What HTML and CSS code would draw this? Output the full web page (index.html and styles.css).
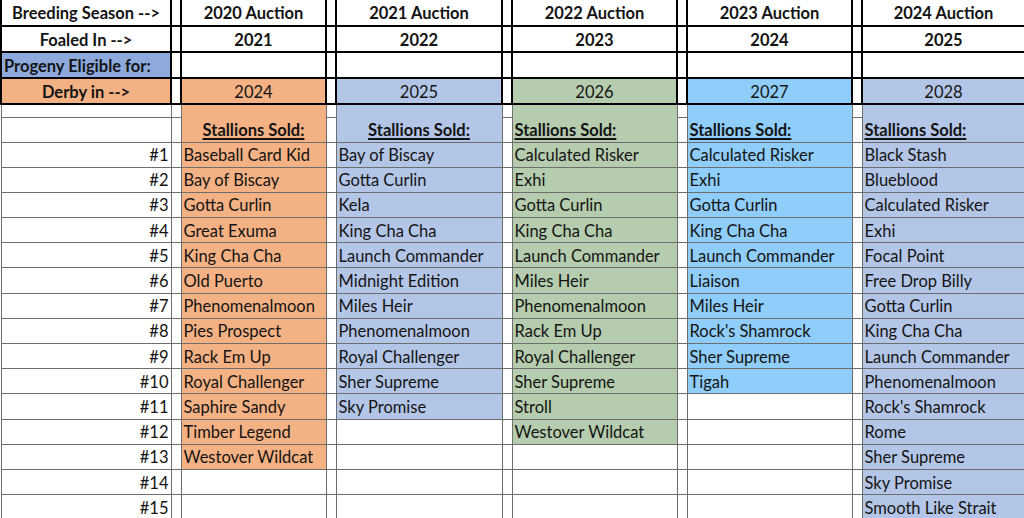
FILE: index.html
```html
<!DOCTYPE html>
<html>
<head>
<meta charset="utf-8">
<link rel="stylesheet" href="styles.css">
</head>
<body>
<table class="sheet">
  <colgroup>
    <col class="c-label"><col class="c-gap"><col class="c-a"><col class="c-gap"><col class="c-b"><col class="c-gap"><col class="c-c"><col class="c-gap"><col class="c-d"><col class="c-gap"><col class="c-e">
  </colgroup>
  <tbody>
    <tr class="r-head r1">
      <td class="hd lbl">Breeding Season --&gt;</td><td class="hd"></td>
      <td class="hd">2020 Auction</td><td class="hd"></td>
      <td class="hd">2021 Auction</td><td class="hd"></td>
      <td class="hd">2022 Auction</td><td class="hd"></td>
      <td class="hd">2023 Auction</td><td class="hd"></td>
      <td class="hd">2024 Auction</td>
    </tr>
    <tr class="r-head r2">
      <td class="hd lbl">Foaled In --&gt;</td><td class="hd"></td>
      <td class="hd">2021</td><td class="hd"></td>
      <td class="hd">2022</td><td class="hd"></td>
      <td class="hd">2023</td><td class="hd"></td>
      <td class="hd">2024</td><td class="hd"></td>
      <td class="hd">2025</td>
    </tr>
    <tr class="r-head r3">
      <td class="hd lbl left bg-prog">Progeny Eligible for:</td><td class="hd"></td>
      <td class="hd"></td><td class="hd"></td>
      <td class="hd"></td><td class="hd"></td>
      <td class="hd"></td><td class="hd"></td>
      <td class="hd"></td><td class="hd"></td>
      <td class="hd"></td>
    </tr>
    <tr class="r-head r4">
      <td class="hd lbl bg-or">Derby in --&gt;</td><td class="hd"></td>
      <td class="hd yr bg-or">2024</td><td class="hd"></td>
      <td class="hd yr bg-bl">2025</td><td class="hd"></td>
      <td class="hd yr bg-gr">2026</td><td class="hd"></td>
      <td class="hd yr bg-lb">2027</td><td class="hd"></td>
      <td class="hd yr bg-bl">2028</td>
    </tr>
    <tr class="r-spacer">
      <td></td><td></td>
      <td class="join bg-or"></td><td></td>
      <td class="join bg-bl"></td><td></td>
      <td class="join bg-gr"></td><td></td>
      <td class="join bg-lb"></td><td></td>
      <td class="join bg-bl"></td>
    </tr>
    <tr class="r-sold">
      <td></td><td></td>
      <td class="sold center bg-or"><span>Stallions Sold:</span></td><td></td>
      <td class="sold center bg-bl"><span>Stallions Sold:</span></td><td></td>
      <td class="sold bg-gr"><span>Stallions Sold:</span></td><td></td>
      <td class="sold bg-lb"><span>Stallions Sold:</span></td><td></td>
      <td class="sold bg-bl"><span>Stallions Sold:</span></td>
    </tr>
    <tr><td class="num">#1</td><td></td><td class="nm bg-or">Baseball Card Kid</td><td></td><td class="nm bg-bl">Bay of Biscay</td><td></td><td class="nm bg-gr">Calculated Risker</td><td></td><td class="nm bg-lb">Calculated Risker</td><td></td><td class="nm bg-bl">Black Stash</td></tr>
    <tr><td class="num">#2</td><td></td><td class="nm bg-or">Bay of Biscay</td><td></td><td class="nm bg-bl">Gotta Curlin</td><td></td><td class="nm bg-gr">Exhi</td><td></td><td class="nm bg-lb">Exhi</td><td></td><td class="nm bg-bl">Blueblood</td></tr>
    <tr><td class="num">#3</td><td></td><td class="nm bg-or">Gotta Curlin</td><td></td><td class="nm bg-bl">Kela</td><td></td><td class="nm bg-gr">Gotta Curlin</td><td></td><td class="nm bg-lb">Gotta Curlin</td><td></td><td class="nm bg-bl">Calculated Risker</td></tr>
    <tr><td class="num">#4</td><td></td><td class="nm bg-or">Great Exuma</td><td></td><td class="nm bg-bl">King Cha Cha</td><td></td><td class="nm bg-gr">King Cha Cha</td><td></td><td class="nm bg-lb">King Cha Cha</td><td></td><td class="nm bg-bl">Exhi</td></tr>
    <tr><td class="num">#5</td><td></td><td class="nm bg-or">King Cha Cha</td><td></td><td class="nm bg-bl">Launch Commander</td><td></td><td class="nm bg-gr">Launch Commander</td><td></td><td class="nm bg-lb">Launch Commander</td><td></td><td class="nm bg-bl">Focal Point</td></tr>
    <tr><td class="num">#6</td><td></td><td class="nm bg-or">Old Puerto</td><td></td><td class="nm bg-bl">Midnight Edition</td><td></td><td class="nm bg-gr">Miles Heir</td><td></td><td class="nm bg-lb">Liaison</td><td></td><td class="nm bg-bl">Free Drop Billy</td></tr>
    <tr><td class="num">#7</td><td></td><td class="nm bg-or">Phenomenalmoon</td><td></td><td class="nm bg-bl">Miles Heir</td><td></td><td class="nm bg-gr">Phenomenalmoon</td><td></td><td class="nm bg-lb">Miles Heir</td><td></td><td class="nm bg-bl">Gotta Curlin</td></tr>
    <tr><td class="num">#8</td><td></td><td class="nm bg-or">Pies Prospect</td><td></td><td class="nm bg-bl">Phenomenalmoon</td><td></td><td class="nm bg-gr">Rack Em Up</td><td></td><td class="nm bg-lb">Rock's Shamrock</td><td></td><td class="nm bg-bl">King Cha Cha</td></tr>
    <tr><td class="num">#9</td><td></td><td class="nm bg-or">Rack Em Up</td><td></td><td class="nm bg-bl">Royal Challenger</td><td></td><td class="nm bg-gr">Royal Challenger</td><td></td><td class="nm bg-lb">Sher Supreme</td><td></td><td class="nm bg-bl">Launch Commander</td></tr>
    <tr><td class="num">#10</td><td></td><td class="nm bg-or">Royal Challenger</td><td></td><td class="nm bg-bl">Sher Supreme</td><td></td><td class="nm bg-gr">Sher Supreme</td><td></td><td class="nm bg-lb">Tigah</td><td></td><td class="nm bg-bl">Phenomenalmoon</td></tr>
    <tr><td class="num">#11</td><td></td><td class="nm bg-or">Saphire Sandy</td><td></td><td class="nm bg-bl">Sky Promise</td><td></td><td class="nm bg-gr">Stroll</td><td></td><td class="nm"></td><td></td><td class="nm bg-bl">Rock's Shamrock</td></tr>
    <tr><td class="num">#12</td><td></td><td class="nm bg-or">Timber Legend</td><td></td><td class="nm"></td><td></td><td class="nm bg-gr">Westover Wildcat</td><td></td><td class="nm"></td><td></td><td class="nm bg-bl">Rome</td></tr>
    <tr><td class="num">#13</td><td></td><td class="nm bg-or">Westover Wildcat</td><td></td><td class="nm"></td><td></td><td class="nm"></td><td></td><td class="nm"></td><td></td><td class="nm bg-bl">Sher Supreme</td></tr>
    <tr><td class="num">#14</td><td></td><td class="nm"></td><td></td><td class="nm"></td><td></td><td class="nm"></td><td></td><td class="nm"></td><td></td><td class="nm bg-bl">Sky Promise</td></tr>
    <tr><td class="num">#15</td><td></td><td class="nm"></td><td></td><td class="nm"></td><td></td><td class="nm"></td><td></td><td class="nm"></td><td></td><td class="nm bg-bl">Smooth Like Strait</td></tr>
  </tbody>
</table>
</body>
</html>
```
FILE: styles.css
```css
html, body {
  margin: 0;
  padding: 0;
  background: #ffffff;
  overflow: hidden;
}

body {
  width: 1024px;
  height: 518px;
  font-family: Lato, "Open Sans", "Liberation Sans", sans-serif;
  font-size: 16.5px;
  color: #141414;
}

.sheet {
  border-collapse: collapse;
  table-layout: fixed;
  width: 1024px;
}

.c-label { width: 170px; }
.c-gap { width: 10px; }
.c-a { width: 145px; }
.c-b { width: 166px; }
.c-c { width: 165px; }
.c-d { width: 165px; }
.c-e { width: 163px; }

.sheet td {
  border: 1px solid #6e6e6e;
  padding: 2px 2px 0 2px;
  white-space: nowrap;
  overflow: hidden;
  vertical-align: middle;
  line-height: 19px;
}

.sheet tr { height: 25.2px; }
.sheet tr.r1 { height: 26px; }
.sheet tr.r2,
.sheet tr.r3,
.sheet tr.r4 { height: 26px; }
.sheet tr.r-spacer { height: 13px; }
.sheet tr.r-sold { height: 25px; }

.sheet tr.r-spacer td {
  padding: 0;
}

.sheet td.hd {
  border: 2px solid #000000;
  font-weight: 700;
  text-align: center;
}

.sheet tr.r1 td.hd {
  border-top: none;
}

.sheet td.hd.yr {
  font-weight: 400;
}

.sheet td.left {
  text-align: left;
}

.sheet td.join {
  border-bottom: hidden;
}

.sheet td.sold {
  border-top: hidden;
  font-weight: 700;
}

.sheet td.sold span {
  text-decoration: underline;
  text-decoration-thickness: 1.5px;
  text-underline-offset: 2px;
}

.sheet td.center {
  text-align: center;
}

.sheet td.num {
  text-align: right;
}

.bg-or { background: #f4b183; }
.bg-bl { background: #b4c6e7; }
.bg-gr { background: #b5ccae; }
.bg-lb { background: #8fcdfb; }
.bg-prog { background: #8eaadc; }
```
